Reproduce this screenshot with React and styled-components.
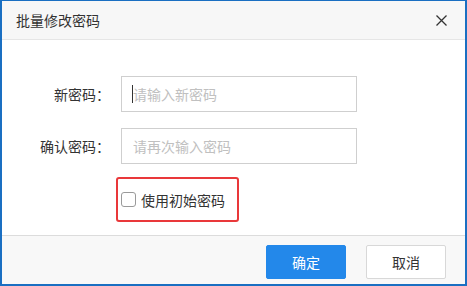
import React from "react";
import styled, { createGlobalStyle } from "styled-components";

const GlobalStyle = createGlobalStyle`
  *, *::before, *::after {
    box-sizing: border-box;
  }
  html, body {
    margin: 0;
    padding: 0;
    background: #ffffff;
  }
  body {
    font-family: "Noto Sans CJK SC", "Noto Sans", sans-serif;
  }
`;

const Dialog = styled.div`
  width: 467px;
  height: 286px;
  border: 2px solid #1a6fc2;
  border-top-width: 1px;
  display: flex;
  flex-direction: column;
  background: #fff;
`;

const Header = styled.div`
  height: 39px;
  flex: none;
  display: flex;
  align-items: center;
  justify-content: space-between;
  padding: 0 17px 0 14px;
  background: #f7f7f7;
  border-bottom: 1px solid #e6e6e6;
`;

const Title = styled.span`
  font-size: 14px;
  color: #333;
`;

const CloseButton = styled.button`
  border: none;
  background: none;
  padding: 0;
  width: 13px;
  height: 13px;
  display: flex;
  cursor: pointer;
`;

const Body = styled.div`
  flex: 1;
  padding-top: 36px;
  display: flex;
  flex-direction: column;
  gap: 16px;
`;

const Row = styled.div`
  display: grid;
  grid-template-columns: 108px 236px;
  column-gap: 11px;
  align-items: center;
`;

const Label = styled.label`
  text-align: right;
  font-size: 14px;
  color: #333;
`;

const InputWrap = styled.div`
  position: relative;
`;

const Input = styled.input`
  width: 236px;
  height: 36px;
  border: 1px solid #cfcfcf;
  padding: 0 11px;
  font-family: inherit;
  font-size: 14px;
  color: #333;
  outline: none;
  &::placeholder {
    color: #c0c0c0;
  }
`;

const Caret = styled.span`
  position: absolute;
  left: 11px;
  top: 9px;
  width: 1px;
  height: 18px;
  background: #333;
`;

const CheckRow = styled.div`
  display: grid;
  grid-template-columns: 108px auto;
  column-gap: 6px;
  margin-top: -3px;
`;

const Highlight = styled.div`
  grid-column: 2;
  justify-self: start;
  width: 123px;
  height: 45px;
  border: 2px solid #e9383a;
  border-radius: 3px;
  display: flex;
  align-items: center;
  padding-left: 3px;
  gap: 5px;
`;

const Box = styled.span`
  width: 15px;
  height: 15px;
  border: 1px solid #9a9a9a;
  border-radius: 3px;
  background: #fff;
`;

const CheckText = styled.span`
  font-size: 14px;
  color: #333;
`;

const Footer = styled.div`
  height: 49px;
  flex: none;
  border-top: 1px solid #dcdcdc;
  background: #f8f8f8;
  display: flex;
  justify-content: flex-end;
  align-items: flex-start;
  padding: 9px 19px 0 0;
  gap: 20px;
`;

const Button = styled.button`
  width: 80px;
  height: 34px;
  border-radius: 2px;
  font-family: inherit;
  font-size: 14px;
  cursor: pointer;
  border: 1px solid ${(p) => (p.$primary ? "#2388ea" : "#d8d8d8")};
  background: ${(p) => (p.$primary ? "#2388ea" : "#ffffff")};
  color: ${(p) => (p.$primary ? "#ffffff" : "#333333")};
`;

export default function App() {
  return (
    <>
      <GlobalStyle />
      <Dialog>
        <Header>
          <Title>批量修改密码</Title>
          <CloseButton aria-label="关闭">
            <svg width="13" height="13" viewBox="0 0 13 13">
              <path d="M1.5 1.5 L11.5 11.5 M11.5 1.5 L1.5 11.5" stroke="#333" strokeWidth="1.3" fill="none" />
            </svg>
          </CloseButton>
        </Header>
        <Body>
          <Row>
            <Label>新密码：</Label>
            <InputWrap>
              <Input placeholder="请输入新密码" type="password" />
              <Caret />
            </InputWrap>
          </Row>
          <Row>
            <Label>确认密码：</Label>
            <InputWrap>
              <Input placeholder="请再次输入密码" type="password" />
            </InputWrap>
          </Row>
          <CheckRow>
            <Highlight>
              <Box />
              <CheckText>使用初始密码</CheckText>
            </Highlight>
          </CheckRow>
        </Body>
        <Footer>
          <Button $primary>确定</Button>
          <Button>取消</Button>
        </Footer>
      </Dialog>
    </>
  );
}
